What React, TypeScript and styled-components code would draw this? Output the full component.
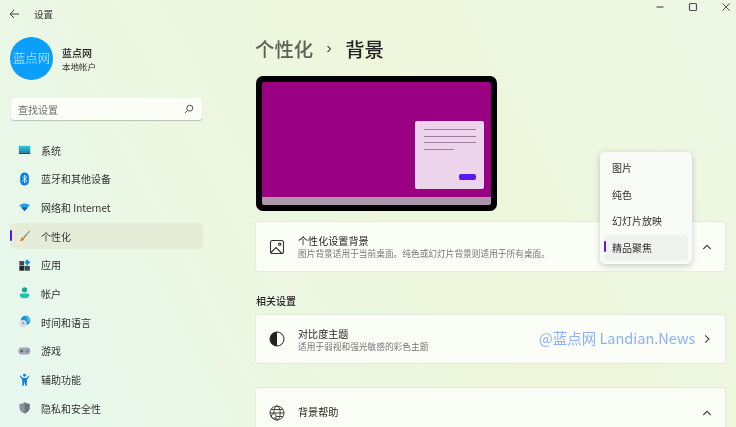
import React from "react";
import styled, { createGlobalStyle } from "styled-components";

const GlobalStyle = createGlobalStyle`
  html, body {
    margin: 0;
    padding: 0;
    overflow: hidden;
  }
  * {
    box-sizing: border-box;
  }
  svg {
    display: block;
    flex: none;
  }
`;

const Window = styled.div`
  position: relative;
  width: 736px;
  height: 427px;
  overflow: hidden;
  display: flex;
  flex-direction: column;
  font-family: "Noto Sans CJK SC", "Noto Sans", sans-serif;
  color: #1c1c1c;
  background: linear-gradient(62deg, #e6f8f0 0%, #ecf7e2 32%, #eef7dc 60%, #edf7e4 100%);
  filter: blur(0.4px);
`;

const TitleBar = styled.div`
  height: 28px;
  flex: none;
  display: flex;
  align-items: center;
  padding-left: 9px;
  gap: 14px;
  font-size: 9.5px;
  color: #3a3a3a;
`;

const Controls = styled.div`
  margin-left: auto;
  align-self: flex-start;
  display: flex;
  align-items: center;
  height: 14px;
  gap: 23px;
  padding-right: 5px;
`;

const Body = styled.div`
  flex: 1;
  display: flex;
  min-height: 0;
`;

const Sidebar = styled.aside`
  width: 213px;
  flex: none;
  padding: 9px 10px 0;
`;

const Profile = styled.div`
  display: flex;
  align-items: center;
  gap: 9px;
  height: 43px;
`;

const Avatar = styled.div`
  width: 43px;
  height: 43px;
  border-radius: 50%;
  background: #0a9ffb;
  color: #d9f0ff;
  font-size: 12.4px;
  font-weight: 300;
  display: flex;
  align-items: center;
  justify-content: center;
  padding-bottom: 2px;
`;

const ProfileText = styled.div`
  display: flex;
  flex-direction: column;
`;

const ProfileName = styled.div`
  font-size: 10px;
  font-weight: 500;
  line-height: 14px;
`;

const ProfileType = styled.div`
  font-size: 8.5px;
  line-height: 12px;
  color: #333;
`;

const Search = styled.div`
  margin: 18px 1px 0;
  height: 22px;
  width: 191px;
  border-radius: 3px;
  background: #fbfdf7;
  box-shadow: 0 1px 1px rgba(0, 0, 0, 0.22);
  display: flex;
  align-items: center;
  justify-content: space-between;
  padding: 0 8px 0 7px;
  font-size: 10px;
  color: #6f6f6f;
`;

const Nav = styled.nav`
  margin-top: 17px;
  display: flex;
  flex-direction: column;
  gap: 2.7px;
`;

const NavItem = styled.div<{ $active?: boolean }>`
  position: relative;
  width: 193px;
  height: 26px;
  flex: none;
  border-radius: 4px;
  display: flex;
  align-items: center;
  gap: 9px;
  padding-left: 8px;
  font-size: 10px;
  color: #333;
  background: ${({ $active }) => ($active ? "#e5ecd8" : "transparent")};
`;

const ActiveMark = styled.span`
  position: absolute;
  left: 0;
  top: 7px;
  width: 2px;
  height: 11px;
  border-radius: 1px;
  background: #5a14f0;
`;

const Main = styled.main`
  flex: 1;
  padding: 9px 11px 0 43px;
  min-width: 0;
`;

const Heading = styled.h1`
  margin: -1px 0 0 -1px;
  height: 26px;
  display: flex;
  align-items: center;
  gap: 11px;
  font-size: 19.4px;
  font-weight: 500;
  line-height: 26px;
`;

const Crumb = styled.span<{ $muted?: boolean }>`
  color: ${({ $muted }) => ($muted ? "#5c6458" : "#222")};
`;

const Monitor = styled.div`
  margin-top: 14px;
  width: 241px;
  height: 135px;
  padding: 6px;
  border-radius: 7px;
  background: #000;
`;

const Screen = styled.div`
  height: 100%;
  border-radius: 2px;
  overflow: hidden;
  display: flex;
  flex-direction: column;
`;

const Wallpaper = styled.div`
  flex: 1;
  background: #990082;
  display: flex;
  align-items: flex-end;
  justify-content: flex-end;
  padding: 0 7px 8px 0;
`;

const Taskbar = styled.div`
  height: 8px;
  flex: none;
  background: #ad96a9;
`;

const SampleWindow = styled.div`
  width: 69px;
  height: 68px;
  border-radius: 2px;
  background: #ecd4ec;
  padding: 8px 8px 9px 9px;
  display: flex;
  flex-direction: column;
  gap: 5.5px;
`;

const SampleLine = styled.div<{ $short?: boolean }>`
  height: 1px;
  width: ${({ $short }) => ($short ? "30px" : "52px")};
  background: #9b7f9b;
`;

const SampleButton = styled.div`
  margin-top: auto;
  align-self: flex-end;
  width: 17px;
  height: 6px;
  border-radius: 2px;
  background: #5a19f0;
`;

const Card = styled.section<{ $height: number; $top: number }>`
  margin-top: ${({ $top }) => $top}px;
  height: ${({ $height }) => $height}px;
  border-radius: 3px;
  background: #fbfdf7;
  box-shadow: 0 0 0 1px rgba(225, 232, 212, 0.7);
  display: flex;
  align-items: center;
  padding: 0 13px;
  gap: 13px;
`;

const CardText = styled.div<{ $solo?: boolean }>`
  flex: 1;
  display: flex;
  flex-direction: column;
  padding-top: ${({ $solo }) => ($solo ? "0" : "2px")};
  font-family: "Liberation Sans", "Noto Sans CJK SC", sans-serif;
`;

const CardTitle = styled.div`
  font-size: 10.1px;
  line-height: 13px;
  color: #262626;
`;

const CardSub = styled.div`
  font-size: 8.7px;
  line-height: 12px;
  color: #777;
`;

const SectionLabel = styled.div`
  margin-top: 23px;
  height: 14px;
  font-size: 10px;
  font-weight: 500;
  line-height: 14px;
  color: #262626;
`;

const Menu = styled.div`
  position: absolute;
  left: 600px;
  top: 152px;
  width: 92px;
  height: 112px;
  padding: 3px 4px 2px;
  border-radius: 5px;
  background: #f8fbf6;
  box-shadow: 0 2px 6px rgba(0, 0, 0, 0.2);
  display: flex;
  flex-direction: column;
  gap: 0.7px;
`;

const MenuItem = styled.div<{ $active?: boolean }>`
  position: relative;
  height: 26px;
  flex: none;
  display: flex;
  align-items: center;
  padding: 0 0 1px 8px;
  border-radius: 3px;
  font-size: 10px;
  color: #333;
  background: ${({ $active }) => ($active ? "#f0f2ee" : "transparent")};
`;

const MenuMark = styled.span`
  position: absolute;
  left: 0;
  top: 6px;
  width: 2px;
  height: 11px;
  border-radius: 1px;
  background: #5a14f0;
`;

const Watermark = styled.div`
  position: absolute;
  left: 539px;
  top: 327px;
  font-size: 14.5px;
  line-height: 22px;
  white-space: nowrap;
  color: #8cb1f7;
`;

const Chevron = ({ up }: { up?: boolean }) => (
  <svg width="10" height="10" viewBox="0 0 10 10" fill="none" stroke="#444" strokeWidth="1.1">
    {up ? <path d="M1.3 7 5 3.3 8.7 7" /> : <path d="M3.2 1.3 7 5 3.2 8.7" />}
  </svg>
);

const NavIcon = ({ children }: { children: React.ReactNode }) => (
  <svg width="14" height="14" viewBox="0 0 16 16">
    {children}
  </svg>
);

const SystemIcon = () => (
  <NavIcon>
    <defs>
      <linearGradient id="sys" x1="0" y1="0" x2="0" y2="1">
        <stop offset="0" stopColor="#3cc6e0" />
        <stop offset="1" stopColor="#0f86b8" />
      </linearGradient>
    </defs>
    <rect x="1" y="3" width="13" height="8" rx="0.6" fill="url(#sys)" />
    <rect x="1" y="11" width="13" height="1.6" fill="#1d4f68" />
  </NavIcon>
);

const BluetoothIcon = () => (
  <NavIcon>
    <rect x="2.5" y="0.5" width="10" height="15" rx="5" fill="#0a7fe8" />
    <path d="M5 5.400 10 10 7.500 12.500V3.500L10 6 5 10.600" fill="none" stroke="#fff" strokeWidth="0.9" />
  </NavIcon>
);

const WifiIcon = () => (
  <NavIcon>
    <path d="M1.500 6C5.200 3.200 9.800 3.200 13.500 6L7.500 12.500Z" fill="#1aa0ee" />
    <path d="M4.300 9C6.300 7.700 8.700 7.700 10.700 9L7.500 12.500Z" fill="#0a5db8" />
  </NavIcon>
);

const BrushIcon = () => (
  <NavIcon>
    <path d="M13.500 1.500 6 9 7.400 10.400 14 2.300Z" fill="#8a8a86" />
    <path d="M5.200 9 7.400 11C6.800 13.200 4 14 2 13.600 3.400 12.600 3.200 9.800 5.200 9Z" fill="#f07a20" />
  </NavIcon>
);

const AppsIcon = () => (
  <NavIcon>
    <rect x="1.500" y="3.500" width="5.500" height="5" fill="#3f4a52" />
    <rect x="1.500" y="9" width="5.500" height="5.500" fill="#23282c" />
    <rect x="7.500" y="9" width="6" height="5.500" fill="#3f4a52" />
    <path d="M10.500 1.500 14 5 10.500 8.500 7.500 5Z" fill="#1a8fe6" />
  </NavIcon>
);

const PersonIcon = () => (
  <NavIcon>
    <circle cx="7.500" cy="4.300" r="3" fill="#12a894" />
    <path d="M2 10.200C2 8.700 3 8.500 4 8.500h7c1 0 2 .2 2 1.700 0 2.600-2.600 3.800-5.500 3.800S2 12.800 2 10.200Z" fill="#1cc4ac" />
  </NavIcon>
);

const TimeIcon = () => (
  <NavIcon>
    <circle cx="8.600" cy="6.200" r="5.400" fill="#1596dc" />
    <path d="M8.300 1c2 .6 2.600 4 1.600 6.400L13.600 7c.6-3-2-6.200-5.300-6Z" fill="#47c3ee" />
    <circle cx="5.600" cy="10" r="4.400" fill="#dcdfe6" />
    <path d="M5.600 7.600V10h1.800" fill="none" stroke="#555" strokeWidth="0.8" />
  </NavIcon>
);

const GameIcon = () => (
  <NavIcon>
    <rect x="0.500" y="4" width="13.500" height="8" rx="3.800" fill="#a2a7b2" />
    <path d="M2.800 8h3M4.300 6.600v2.800" stroke="#2c3138" strokeWidth="0.8" />
    <circle cx="9.600" cy="8.800" r="0.900" fill="#2c6fc0" />
    <circle cx="11.200" cy="7.200" r="0.900" fill="#2c6fc0" />
  </NavIcon>
);

const AccessIcon = () => (
  <NavIcon>
    <circle cx="7.500" cy="2.600" r="1.700" fill="#1082de" />
    <path d="M2.500 2.800 5.500 5.600h4l3-2.800 .8.700-3 4-.3 7.200H8.500L7.500 10 6.500 14.700H5l-.3-7.200-3-4Z" fill="#1082de" />
  </NavIcon>
);

const ShieldIcon = () => (
  <NavIcon>
    <path d="M7.500 1.500c2 1.400 3.700 1.800 5.800 1.900v4.500c0 3-2.500 5.100-5.800 6.300-3.300-1.200-5.800-3.300-5.800-6.300V3.400C3.800 3.300 5.500 2.900 7.500 1.500Z" fill="#8b929c" />
    <path d="M7.500 1.500c2 1.400 3.700 1.800 5.800 1.900v4.500c0 3-2.500 5.100-5.800 6.300Z" fill="#6d747e" />
  </NavIcon>
);

const navItems = [
  { label: "系统", icon: <SystemIcon /> },
  { label: "蓝牙和其他设备", icon: <BluetoothIcon /> },
  { label: "网络和 Internet", icon: <WifiIcon /> },
  { label: "个性化", icon: <BrushIcon />, active: true },
  { label: "应用", icon: <AppsIcon /> },
  { label: "帐户", icon: <PersonIcon /> },
  { label: "时间和语言", icon: <TimeIcon /> },
  { label: "游戏", icon: <GameIcon /> },
  { label: "辅助功能", icon: <AccessIcon /> },
  { label: "隐私和安全性", icon: <ShieldIcon /> },
];

const menuItems = ["图片", "纯色", "幻灯片放映", "精品聚焦"];

function App() {
  return (
    <Window>
      <GlobalStyle />
      <TitleBar>
        <svg width="11" height="10" viewBox="0 0 11 10" fill="none" stroke="#444" strokeWidth="1">
          <path d="M10 5H1.200M5 1 1 5l4 4" />
        </svg>
        <span>设置</span>
        <Controls>
          <svg width="10" height="10" viewBox="0 0 10 10" stroke="#555" strokeWidth="1.200">
            <path d="M1.500 5h7" />
          </svg>
          <svg width="10" height="10" viewBox="0 0 10 10" fill="none" stroke="#555" strokeWidth="1.200">
            <rect x="1.500" y="1.500" width="7" height="7" rx="1" />
          </svg>
          <svg width="10" height="10" viewBox="0 0 10 10" stroke="#555" strokeWidth="1">
            <path d="M1.500 1.500l7 7M8.500 1.500l-7 7" />
          </svg>
        </Controls>
      </TitleBar>
      <Body>
        <Sidebar>
          <Profile>
            <Avatar>蓝点网</Avatar>
            <ProfileText>
              <ProfileName>蓝点网</ProfileName>
              <ProfileType>本地帐户</ProfileType>
            </ProfileText>
          </Profile>
          <Search>
            <span>查找设置</span>
            <svg width="10" height="10" viewBox="0 0 10 10" fill="none" stroke="#555" strokeWidth="1">
              <circle cx="5.800" cy="4.200" r="3" />
              <path d="M3.600 6.400 1 9" />
            </svg>
          </Search>
          <Nav>
            {navItems.map((item) => (
              <NavItem key={item.label} $active={item.active}>
                {item.active && <ActiveMark />}
                {item.icon}
                <span>{item.label}</span>
              </NavItem>
            ))}
          </Nav>
        </Sidebar>
        <Main>
          <Heading>
            <Crumb $muted>个性化</Crumb>
            <svg width="10" height="10" viewBox="0 0 10 10" fill="none" stroke="#555" strokeWidth="1.100">
              <path d="M3.500 2 6.500 5 3.500 8" />
            </svg>
            <Crumb>背景</Crumb>
          </Heading>
          <Monitor>
            <Screen>
              <Wallpaper>
                <SampleWindow>
                  <SampleLine />
                  <SampleLine />
                  <SampleLine />
                  <SampleLine $short />
                  <SampleButton />
                </SampleWindow>
              </Wallpaper>
              <Taskbar />
            </Screen>
          </Monitor>
          <Card $height={49} $top={11}>
            <svg width="16" height="16" viewBox="0 0 16 16" fill="none" stroke="#333" strokeWidth="1.100">
              <rect x="1.500" y="1.500" width="13" height="13" rx="2" />
              <circle cx="10.700" cy="5.300" r="1.200" />
              <path d="M2 13.500 7 8.500l5.500 5.500" />
            </svg>
            <CardText>
              <CardTitle>个性化设置背景</CardTitle>
              <CardSub>图片背景适用于当前桌面。纯色或幻灯片背景则适用于所有桌面。</CardSub>
            </CardText>
            <Chevron up />
          </Card>
          <SectionLabel>相关设置</SectionLabel>
          <Card $height={48} $top={7}>
            <svg width="16" height="16" viewBox="0 0 16 16">
              <circle cx="8" cy="8" r="7" fill="none" stroke="#222" strokeWidth="1" />
              <path d="M8 1a7 7 0 0 0 0 14Z" fill="#222" />
            </svg>
            <CardText>
              <CardTitle>对比度主题</CardTitle>
              <CardSub>适用于弱视和强光敏感的彩色主题</CardSub>
            </CardText>
            <Chevron />
          </Card>
          <Card $height={49} $top={25}>
            <svg width="16" height="16" viewBox="0 0 16 16" fill="none" stroke="#333" strokeWidth="0.900">
              <circle cx="8" cy="8" r="7" />
              <ellipse cx="8" cy="8" rx="3.200" ry="7" />
              <path d="M1 8h14M2.200 4.500h11.600M2.200 11.500h11.600" />
              <circle cx="4.800" cy="11" r="2.400" fill="#fbfdf7" />
              <path d="M6.500 12.700 8.200 14.400" />
            </svg>
            <CardText $solo>
              <CardTitle>背景帮助</CardTitle>
            </CardText>
            <Chevron up />
          </Card>
        </Main>
      </Body>
      <Menu>
        {menuItems.map((label, i) => (
          <MenuItem key={label} $active={i === 3}>
            {i === 3 && <MenuMark />}
            {label}
          </MenuItem>
        ))}
      </Menu>
      <Watermark>@蓝点网 Landian.News</Watermark>
    </Window>
  );
}

export default App;
